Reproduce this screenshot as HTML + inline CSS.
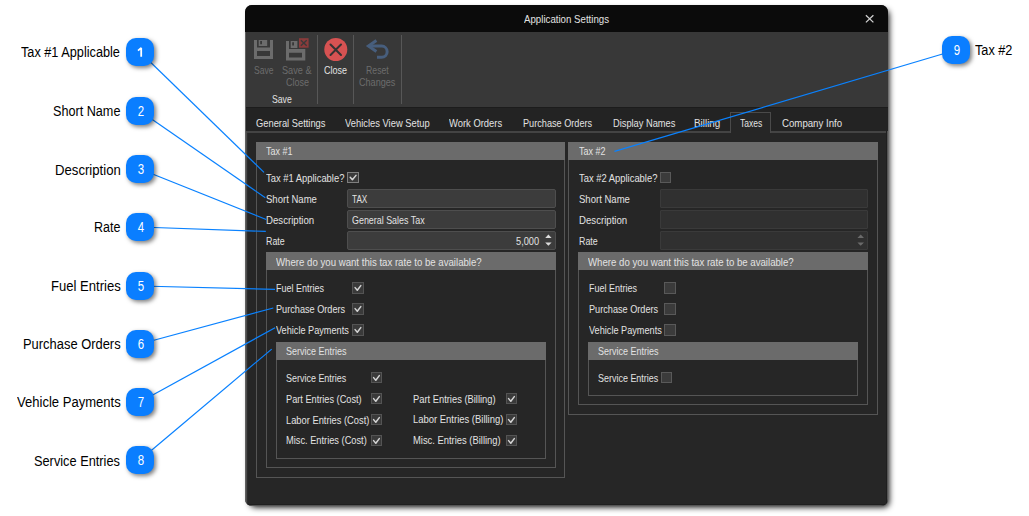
<!DOCTYPE html>
<html><head><meta charset="utf-8"><style>
html,body{margin:0;padding:0}
body{width:1029px;height:516px;background:#fff;position:relative;overflow:hidden;font-family:"Liberation Sans",sans-serif}
.a{position:absolute;box-sizing:border-box}
.tx{position:absolute;white-space:nowrap;transform-origin:0 0;font-family:"Liberation Sans",sans-serif}
.win{left:245px;top:5px;width:643px;height:501px;background:#262626;border-radius:7px;box-shadow:3px 3px 6px -2px rgba(0,0,0,1);overflow:hidden}
.grp{border:1px solid #555}
.hdr{background:#6b6b6b}
.inp{border:1px solid #4e4e4e;background:#3c3c3c;border-radius:2px}
.inpd{border:1px solid #3a3a3a;background:#303030;border-radius:1px}
.cb{border:1px solid #545454;background:#3a3a3a}
.cbd{border:1px solid #595959;background:#3b3b3b}
.bd{width:28px;height:28px;border-radius:10px;background:#0a7eff;box-shadow:2px 2px 4px rgba(0,0,0,.5);color:#fff;font-size:14px;line-height:28px;text-align:center}
.bd span{display:inline-block;transform:scaleX(.82);position:relative;left:.5px}
</style></head><body>
<div class="a win">
  <div class="a" style="left:0;top:0;width:643px;height:27px;background:#0b0b0b"></div>
  <div class="a" style="left:0;top:27px;width:643px;height:75px;background:#383838"></div>
  <div class="a" style="left:0;top:102px;width:643px;height:1px;background:#1c1c1c"></div>
  <div class="a" style="left:0;top:103px;width:643px;height:23px;background:#232323"></div>
  <div class="a" style="left:1px;top:126px;width:641px;height:2px;background:#444"></div>
  <div class="a" style="left:0;top:27px;width:1px;height:474px;background:#606060"></div>
  <div class="a" style="left:642px;top:126px;width:1px;height:375px;background:#555"></div>
  <div class="a" style="left:0;top:500px;width:643px;height:1px;background:#555"></div>
  <div class="a" style="left:1px;top:499px;width:641px;height:1px;background:#1f1f1f"></div>
  <div class="a" style="left:641px;top:126px;width:1px;height:374px;background:#1f1f1f"></div>
  <div class="a" style="left:1px;top:126px;width:1px;height:374px;background:#4c4c4c"></div><div class="a" style="left:2px;top:128px;width:1px;height:372px;background:#2c2c2c"></div>
  <!-- ribbon separators -->
  <div class="a" style="left:72px;top:30px;width:1px;height:69px;background:#575757"></div>
  <div class="a" style="left:108px;top:30px;width:1px;height:69px;background:#575757"></div>
  <div class="a" style="left:156px;top:30px;width:1px;height:69px;background:#575757"></div>
  <!-- taxes tab -->
  <div class="a" style="left:485px;top:107px;width:41px;height:21px;border:1px solid #4a4a4a;border-bottom:none;background:#262626"></div>
</div>
<!-- groups -->
<div class="a grp" style="left:256px;top:142px;width:309px;height:336px"></div>
<div class="a hdr" style="left:256px;top:142px;width:309px;height:18px"></div>
<div class="a grp" style="left:266px;top:252px;width:290px;height:216px"></div>
<div class="a hdr" style="left:266px;top:252px;width:290px;height:18px"></div>
<div class="a grp" style="left:276px;top:342px;width:270px;height:117px"></div>
<div class="a hdr" style="left:276px;top:342px;width:270px;height:18px"></div>

<div class="a grp" style="left:568px;top:142px;width:310px;height:273px"></div>
<div class="a hdr" style="left:568px;top:142px;width:310px;height:18px"></div>
<div class="a grp" style="left:578px;top:252px;width:290px;height:153px"></div>
<div class="a hdr" style="left:578px;top:252px;width:290px;height:18px"></div>
<div class="a grp" style="left:588px;top:342px;width:270px;height:54px"></div>
<div class="a hdr" style="left:588px;top:342px;width:270px;height:18px"></div>

<!-- inputs -->
<div class="a inp" style="left:347px;top:189px;width:209px;height:19px"></div>
<div class="a inp" style="left:347px;top:210px;width:209px;height:19px"></div>
<div class="a inp" style="left:347px;top:231px;width:209px;height:19px"></div>
<div class="a inpd" style="left:660px;top:189px;width:208px;height:19px"></div>
<div class="a inpd" style="left:660px;top:210px;width:208px;height:19px"></div>
<div class="a inpd" style="left:660px;top:231px;width:208px;height:19px"></div>
<svg class="a" style="left:0;top:0" width="1029" height="516">
  <path d="M545.2 238 L548.4 234.6 L551.6 238 Z M545.2 242.5 L548.4 245.7 L551.6 242.5 Z" fill="#dcdcdc"/>
  <path d="M857.4 238 L860.7 234.6 L864 238 Z M857.4 242.5 L860.7 245.7 L864 242.5 Z" fill="#6a6a6a"/>
</svg>

<!-- checkboxes -->
<div class="a cb" style="left:347px;top:172px;width:12px;height:11px;border-color:#7e7e7e"></div>
<div class="a cb" style="left:352px;top:282px;width:12px;height:12px"></div>
<div class="a cb" style="left:352px;top:303px;width:12px;height:12px"></div>
<div class="a cb" style="left:352px;top:324px;width:12px;height:12px"></div>
<div class="a cb" style="left:371px;top:372px;width:11px;height:11px"></div>
<div class="a cb" style="left:371px;top:393px;width:11px;height:11px"></div>
<div class="a cb" style="left:371px;top:414px;width:11px;height:11px"></div>
<div class="a cb" style="left:371px;top:435px;width:11px;height:11px"></div>
<div class="a cb" style="left:506px;top:393px;width:11px;height:11px"></div>
<div class="a cb" style="left:506px;top:414px;width:11px;height:11px"></div>
<div class="a cb" style="left:506px;top:435px;width:11px;height:11px"></div>
<div class="a cbd" style="left:660px;top:172px;width:11px;height:11px"></div>
<div class="a cbd" style="left:664px;top:282px;width:12px;height:12px"></div>
<div class="a cbd" style="left:664px;top:303px;width:12px;height:12px"></div>
<div class="a cbd" style="left:664px;top:324px;width:12px;height:12px"></div>
<div class="a cbd" style="left:661px;top:372px;width:11px;height:11px"></div>
<svg class="a" style="left:0;top:0" width="1029" height="516">
  <g fill="none" stroke="#d4d4d4" stroke-width="1.5" stroke-linecap="round" stroke-linejoin="round">
    <path d="M350.2 177.3 L352.4 179.8 L356 175.4"/>
    <path d="M355.1 287.6 L357.3 290.3 L360.8 285.6"/>
    <path d="M355.1 308.6 L357.3 311.3 L360.8 306.6"/>
    <path d="M355.1 329.6 L357.3 332.3 L360.8 327.6"/>
    <path d="M373.6 377.6 L375.8 380.3 L379.3 375.6"/>
    <path d="M373.6 398.6 L375.8 401.3 L379.3 396.6"/>
    <path d="M373.6 419.6 L375.8 422.3 L379.3 417.6"/>
    <path d="M373.6 440.6 L375.8 443.3 L379.3 438.6"/>
    <path d="M508.6 398.6 L510.8 401.3 L514.3 396.6"/>
    <path d="M508.6 419.6 L510.8 422.3 L514.3 417.6"/>
    <path d="M508.6 440.6 L510.8 443.3 L514.3 438.6"/>
  </g>
</svg>

<!-- ribbon icons -->
<svg class="a" style="left:0;top:0" width="1029" height="516">
  <g fill="#6c6c6c">
    <path d="M254 40 H257 V47.5 H270 V40 H273 V59 H254 Z M257 51 V56 H270 V51 Z" fill-rule="evenodd"/>
    <path d="M258.7 40 H267.2 V46 H258.7 Z M260.2 41.1 V44.3 H262 V41.1 Z" fill-rule="evenodd"/>
    <path d="M286 41 H289 V49 H302 V49 H305.3 V60.6 H286 Z M289 52.7 V57.5 H302 V52.7 Z" fill-rule="evenodd"/>
    <path d="M290.7 41 H297.4 V48 H290.7 Z M292.2 42.2 V45.4 H294 V42.2 Z" fill-rule="evenodd"/>
  </g>
  <rect x="299" y="38.2" width="9.6" height="9.5" fill="#8a3b3b"/>
  <path d="M300.9 40.3 L306.7 45.7 M306.7 40.3 L300.9 45.7" stroke="#3a3a3a" stroke-width="1.4"/>
  <circle cx="335.8" cy="49.5" r="11.5" fill="#d65252"/>
  <path d="M330.5 44.5 L341 55 M341 44.5 L330.5 55" stroke="#333" stroke-width="2" stroke-linecap="round"/>
  <g fill="none" stroke="#475e7d" stroke-width="3">
    <path d="M376.4 40.6 L368.5 46 L376.4 51.4"/>
    <path d="M368.5 46.1 H381.6 A5.55 5.55 0 0 1 381.6 57.2 H377"/>
  </g>
  <path d="M865.9 15.2 L873.4 22.4 M873.4 15.2 L865.9 22.4" stroke="#d0d0d0" stroke-width="1.3"/>
</svg>

<span class="tx" style="left:524.40px;top:12.56px;font-size:11px;line-height:12.65px;color:#e2e2e2;transform:scaleX(0.8804)">Application Settings</span>
<span class="tx" style="left:253.90px;top:64.36px;font-size:11px;line-height:12.65px;color:#6c6c6c;transform:scaleX(0.7774)">Save</span>
<span class="tx" style="left:282.20px;top:64.36px;font-size:11px;line-height:12.65px;color:#6c6c6c;transform:scaleX(0.8331)">Save &amp;</span>
<span class="tx" style="left:285.90px;top:75.96px;font-size:11px;line-height:12.65px;color:#6c6c6c;transform:scaleX(0.8213)">Close</span>
<span class="tx" style="left:324.40px;top:64.16px;font-size:11px;line-height:12.65px;color:#e2e2e2;transform:scaleX(0.8177)">Close</span>
<span class="tx" style="left:366.20px;top:64.46px;font-size:11px;line-height:12.65px;color:#6c6c6c;transform:scaleX(0.7915)">Reset</span>
<span class="tx" style="left:359.20px;top:76.06px;font-size:11px;line-height:12.65px;color:#6c6c6c;transform:scaleX(0.8264)">Changes</span>
<span class="tx" style="left:271.50px;top:92.96px;font-size:11px;line-height:12.65px;color:#e2e2e2;transform:scaleX(0.7894)">Save</span>
<span class="tx" style="left:255.50px;top:117.16px;font-size:11px;line-height:12.65px;color:#e2e2e2;transform:scaleX(0.8479)">General Settings</span>
<span class="tx" style="left:345.00px;top:117.16px;font-size:11px;line-height:12.65px;color:#e2e2e2;transform:scaleX(0.8525)">Vehicles View Setup</span>
<span class="tx" style="left:449.40px;top:117.16px;font-size:11px;line-height:12.65px;color:#e2e2e2;transform:scaleX(0.8557)">Work Orders</span>
<span class="tx" style="left:523.00px;top:117.16px;font-size:11px;line-height:12.65px;color:#e2e2e2;transform:scaleX(0.8309)">Purchase Orders</span>
<span class="tx" style="left:612.70px;top:117.16px;font-size:11px;line-height:12.65px;color:#e2e2e2;transform:scaleX(0.8433)">Display Names</span>
<span class="tx" style="left:694.40px;top:117.16px;font-size:11px;line-height:12.65px;color:#e2e2e2;transform:scaleX(0.8963)">Billing</span>
<span class="tx" style="left:740.00px;top:117.16px;font-size:11px;line-height:12.65px;color:#e2e2e2;transform:scaleX(0.7730)">Taxes</span>
<span class="tx" style="left:781.80px;top:117.16px;font-size:11px;line-height:12.65px;color:#e2e2e2;transform:scaleX(0.8777)">Company Info</span>
<span class="tx" style="left:265.90px;top:145.16px;font-size:11px;line-height:12.65px;color:#e2e2e2;transform:scaleX(0.8145)">Tax #1</span>
<span class="tx" style="left:266.00px;top:172.16px;font-size:11px;line-height:12.65px;color:#e2e2e2;transform:scaleX(0.8545)">Tax #1 Applicable?</span>
<span class="tx" style="left:266.00px;top:193.16px;font-size:11px;line-height:12.65px;color:#e2e2e2;transform:scaleX(0.8673)">Short Name</span>
<span class="tx" style="left:266.40px;top:213.86px;font-size:11px;line-height:12.65px;color:#e2e2e2;transform:scaleX(0.8761)">Description</span>
<span class="tx" style="left:266.40px;top:234.66px;font-size:11px;line-height:12.65px;color:#e2e2e2;transform:scaleX(0.8046)">Rate</span>
<span class="tx" style="left:352.00px;top:192.86px;font-size:11px;line-height:12.65px;color:#e2e2e2;transform:scaleX(0.7439)">TAX</span>
<span class="tx" style="left:351.90px;top:213.86px;font-size:11px;line-height:12.65px;color:#e2e2e2;transform:scaleX(0.8099)">General Sales Tax</span>
<span class="tx" style="left:516.00px;top:234.76px;font-size:11px;line-height:12.65px;color:#e2e2e2;transform:scaleX(0.8391)">5,000</span>
<span class="tx" style="left:275.60px;top:255.96px;font-size:11px;line-height:12.65px;color:#e2e2e2;transform:scaleX(0.8761)">Where do you want this tax rate to be available?</span>
<span class="tx" style="left:276.00px;top:282.26px;font-size:11px;line-height:12.65px;color:#e2e2e2;transform:scaleX(0.8160)">Fuel Entries</span>
<span class="tx" style="left:276.00px;top:303.46px;font-size:11px;line-height:12.65px;color:#e2e2e2;transform:scaleX(0.8309)">Purchase Orders</span>
<span class="tx" style="left:276.00px;top:324.46px;font-size:11px;line-height:12.65px;color:#e2e2e2;transform:scaleX(0.8324)">Vehicle Payments</span>
<span class="tx" style="left:285.80px;top:345.06px;font-size:11px;line-height:12.65px;color:#e2e2e2;transform:scaleX(0.8178)">Service Entries</span>
<span class="tx" style="left:285.60px;top:371.76px;font-size:11px;line-height:12.65px;color:#e2e2e2;transform:scaleX(0.8151)">Service Entries</span>
<span class="tx" style="left:285.60px;top:392.76px;font-size:11px;line-height:12.65px;color:#e2e2e2;transform:scaleX(0.8363)">Part Entries (Cost)</span>
<span class="tx" style="left:285.60px;top:413.56px;font-size:11px;line-height:12.65px;color:#e2e2e2;transform:scaleX(0.8470)">Labor Entries (Cost)</span>
<span class="tx" style="left:285.60px;top:434.46px;font-size:11px;line-height:12.65px;color:#e2e2e2;transform:scaleX(0.8416)">Misc. Entries (Cost)</span>
<span class="tx" style="left:413.20px;top:392.76px;font-size:11px;line-height:12.65px;color:#e2e2e2;transform:scaleX(0.8495)">Part Entries (Billing)</span>
<span class="tx" style="left:413.20px;top:413.06px;font-size:11px;line-height:12.65px;color:#e2e2e2;transform:scaleX(0.8594)">Labor Entries (Billing)</span>
<span class="tx" style="left:413.20px;top:434.06px;font-size:11px;line-height:12.65px;color:#e2e2e2;transform:scaleX(0.8537)">Misc. Entries (Billing)</span>
<span class="tx" style="left:578.50px;top:145.16px;font-size:11px;line-height:12.65px;color:#e2e2e2;transform:scaleX(0.8145)">Tax #2</span>
<span class="tx" style="left:578.60px;top:172.16px;font-size:11px;line-height:12.65px;color:#e2e2e2;transform:scaleX(0.8545)">Tax #2 Applicable?</span>
<span class="tx" style="left:578.60px;top:193.16px;font-size:11px;line-height:12.65px;color:#e2e2e2;transform:scaleX(0.8673)">Short Name</span>
<span class="tx" style="left:579.00px;top:213.86px;font-size:11px;line-height:12.65px;color:#e2e2e2;transform:scaleX(0.8761)">Description</span>
<span class="tx" style="left:579.00px;top:234.66px;font-size:11px;line-height:12.65px;color:#e2e2e2;transform:scaleX(0.8046)">Rate</span>
<span class="tx" style="left:588.20px;top:255.96px;font-size:11px;line-height:12.65px;color:#e2e2e2;transform:scaleX(0.8761)">Where do you want this tax rate to be available?</span>
<span class="tx" style="left:588.60px;top:282.26px;font-size:11px;line-height:12.65px;color:#e2e2e2;transform:scaleX(0.8160)">Fuel Entries</span>
<span class="tx" style="left:588.60px;top:303.46px;font-size:11px;line-height:12.65px;color:#e2e2e2;transform:scaleX(0.8309)">Purchase Orders</span>
<span class="tx" style="left:588.60px;top:324.46px;font-size:11px;line-height:12.65px;color:#e2e2e2;transform:scaleX(0.8324)">Vehicle Payments</span>
<span class="tx" style="left:598.40px;top:345.06px;font-size:11px;line-height:12.65px;color:#e2e2e2;transform:scaleX(0.8178)">Service Entries</span>
<span class="tx" style="left:598.20px;top:371.76px;font-size:11px;line-height:12.65px;color:#e2e2e2;transform:scaleX(0.8151)">Service Entries</span>
<span class="tx" style="left:20.50px;top:44.20px;font-size:14px;line-height:16.1px;color:#000;transform:scaleX(0.9077)">Tax #1 Applicable</span>
<span class="tx" style="left:52.70px;top:103.00px;font-size:14px;line-height:16.1px;color:#000;transform:scaleX(0.9024)">Short Name</span>
<span class="tx" style="left:55.26px;top:161.50px;font-size:14px;line-height:16.1px;color:#000;transform:scaleX(0.9393)">Description</span>
<span class="tx" style="left:93.71px;top:219.40px;font-size:14px;line-height:16.1px;color:#000;transform:scaleX(0.8928)">Rate</span>
<span class="tx" style="left:50.57px;top:278.30px;font-size:14px;line-height:16.1px;color:#000;transform:scaleX(0.9336)">Fuel Entries</span>
<span class="tx" style="left:22.68px;top:336.20px;font-size:14px;line-height:16.1px;color:#000;transform:scaleX(0.9225)">Purchase Orders</span>
<span class="tx" style="left:16.60px;top:394.20px;font-size:14px;line-height:16.1px;color:#000;transform:scaleX(0.9319)">Vehicle Payments</span>
<span class="tx" style="left:34.40px;top:452.60px;font-size:14px;line-height:16.1px;color:#000;transform:scaleX(0.9124)">Service Entries</span>
<span class="tx" style="left:975.20px;top:42.40px;font-size:14px;line-height:16.1px;color:#000;transform:scaleX(0.9069)">Tax #2</span>

<!-- callout lines -->
<svg class="a" style="left:0;top:0" width="1029" height="516">
  <g stroke="#0a82ff" stroke-width="1.2" fill="none">
    <path d="M140 52 L264 172.4"/>
    <path d="M140 111 L265.3 197.7"/>
    <path d="M140 169 L266.2 219.5"/>
    <path d="M140 227 L265.8 231.4"/>
    <path d="M140 286 L275 289.4"/>
    <path d="M140 344 L273.3 308"/>
    <path d="M140 402 L275.1 327.7"/>
    <path d="M140 460 L271.7 349.1"/>
    <path d="M956 50 L614.5 151.4"/>
  </g>
</svg>
<div class="a bd" style="left:126px;top:38px"><svg width="28" height="28" style="position:absolute;left:0;top:0"><path d="M12 12.6 L15.2 9.9 V18.8" fill="none" stroke="#fff" stroke-width="1.8" stroke-linejoin="bevel"/></svg></div>
<div class="a bd" style="left:126px;top:97px"><span>2</span></div>
<div class="a bd" style="left:126px;top:155px"><span>3</span></div>
<div class="a bd" style="left:126px;top:213px"><span>4</span></div>
<div class="a bd" style="left:126px;top:272px"><span>5</span></div>
<div class="a bd" style="left:126px;top:330px"><span>6</span></div>
<div class="a bd" style="left:126px;top:388px"><span>7</span></div>
<div class="a bd" style="left:126px;top:446px"><span>8</span></div>
<div class="a bd" style="left:942px;top:36px"><span>9</span></div>
</body></html>
